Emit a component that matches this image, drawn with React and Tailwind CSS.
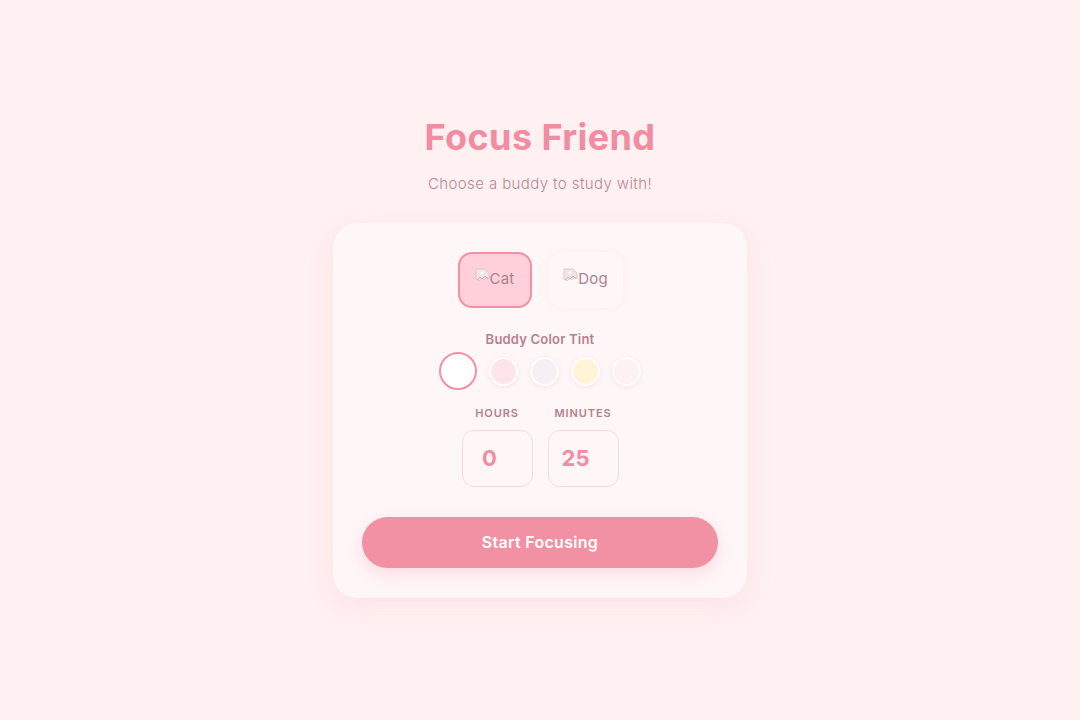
import { useState } from 'react'

const TINTS = [
  { color: '#ffffff', label: 'none' },
  { color: '#ffe5ea', label: 'pink' },
  { color: '#f7eff3', label: 'lavender' },
  { color: '#fff4d6', label: 'yellow' },
  { color: '#fdf1f4', label: 'blush' },
]

function BrokenImage({ alt }) {
  return (
    <span className="flex items-center text-[15px] text-[#a8848e] tracking-[0.2px]">
      <svg width="16" height="18" viewBox="0 0 16 18" className="-mr-[1px] -mt-[5px]">
        <path d="M1 1h9l4 4v6l-2-2-3 3-2-2-3 3-3-2z" fill="#f1e3e6" stroke="#d9c3c8" strokeWidth="0.8" />
        <path d="M2 12l3-3 2 2 3-3 3 3" fill="none" stroke="#c7a9af" strokeWidth="0.9" />
        <circle cx="7" cy="5" r="1.4" fill="#ffffff" />
      </svg>
      {alt}
    </span>
  )
}

export default function App() {
  const [buddy, setBuddy] = useState('cat')
  const [tint, setTint] = useState(0)
  const [hours, setHours] = useState(0)
  const [minutes, setMinutes] = useState(25)

  return (
    <div className="min-h-screen bg-[#fff0f1] flex flex-col items-center pt-[113px] font-['Inter','Noto_Sans',sans-serif]">
      <h1 className="text-[36px] font-bold text-[#f28ca1] leading-[48px] tracking-[0.4px]">Focus Friend</h1>
      <p className="mt-[12px] text-[15px] font-light text-[#b88896] tracking-[0.4px]">Choose a buddy to study with!</p>

      <div className="mt-[27px] w-[414px] bg-[#fff6f7] rounded-[24px] shadow-[0_8px_24px_rgba(244,170,185,0.18)] px-[29px] pt-[29px] pb-[30px] flex flex-col items-center">
        <div className="flex gap-[17px]">
          <button
            onClick={() => setBuddy('cat')}
            className={
              buddy === 'cat'
                ? 'w-[74px] h-[56px] rounded-[14px] border-2 border-[#f490a5] bg-[#ffd0da] flex items-center justify-center'
                : 'w-[74px] h-[56px] rounded-[14px] border-2 border-transparent bg-[#fff6f7] shadow-[0_0_8px_rgba(240,180,190,0.15)] flex items-center justify-center'
            }
          >
            <BrokenImage alt="Cat" />
          </button>
          <button
            onClick={() => setBuddy('dog')}
            className={
              buddy === 'dog'
                ? 'w-[74px] h-[56px] rounded-[14px] border-2 border-[#f490a5] bg-[#ffd0da] flex items-center justify-center'
                : 'w-[74px] h-[56px] rounded-[14px] border-2 border-transparent bg-[#fff6f7] shadow-[0_0_8px_rgba(240,180,190,0.15)] flex items-center justify-center'
            }
          >
            <BrokenImage alt="Dog" />
          </button>
        </div>

        <p className="mt-[22px] text-[13px] font-semibold text-[#b5818f] tracking-[0.2px]">Buddy Color Tint</p>
        <div className="mt-[3px] flex items-center gap-[12px]">
          {TINTS.map((t, i) => (
            <button
              key={t.label}
              onClick={() => setTint(i)}
              style={{ backgroundColor: t.color }}
              className={
                tint === i
                  ? 'w-[38px] h-[38px] rounded-full border-2 border-[#f490a5]'
                  : 'w-[29px] h-[29px] rounded-full border-2 border-white shadow-[0_1px_4px_rgba(240,170,185,0.3)]'
              }
            />
          ))}
        </div>

        <div className="mt-[15px] flex gap-[15px]">
          <label className="flex flex-col items-center">
            <span className="text-[11px] font-semibold tracking-[0.9px] text-[#b5818f]">HOURS</span>
            <input
              type="text"
              value={hours}
              onChange={(e) => setHours(e.target.value)}
              className="mt-[8px] w-[71px] h-[57px] rounded-[12px] border border-[#f8dbe0] bg-[#fff6f7] text-center pr-[15px] text-[22px] font-bold text-[#f28ca1] outline-none"
            />
          </label>
          <label className="flex flex-col items-center">
            <span className="text-[11px] font-semibold tracking-[0.9px] text-[#b5818f]">MINUTES</span>
            <input
              type="text"
              value={minutes}
              onChange={(e) => setMinutes(e.target.value)}
              className="mt-[8px] w-[71px] h-[57px] rounded-[12px] border border-[#f8dbe0] bg-[#fff6f7] text-center pr-[15px] text-[22px] font-bold text-[#f28ca1] outline-none"
            />
          </label>
        </div>

        <button className="mt-[30px] w-full h-[51px] rounded-full bg-[#f291a4] text-white text-[16px] font-semibold tracking-[0.3px] shadow-[0_6px_16px_rgba(242,145,164,0.25)]">
          Start Focusing
        </button>
      </div>
    </div>
  )
}
